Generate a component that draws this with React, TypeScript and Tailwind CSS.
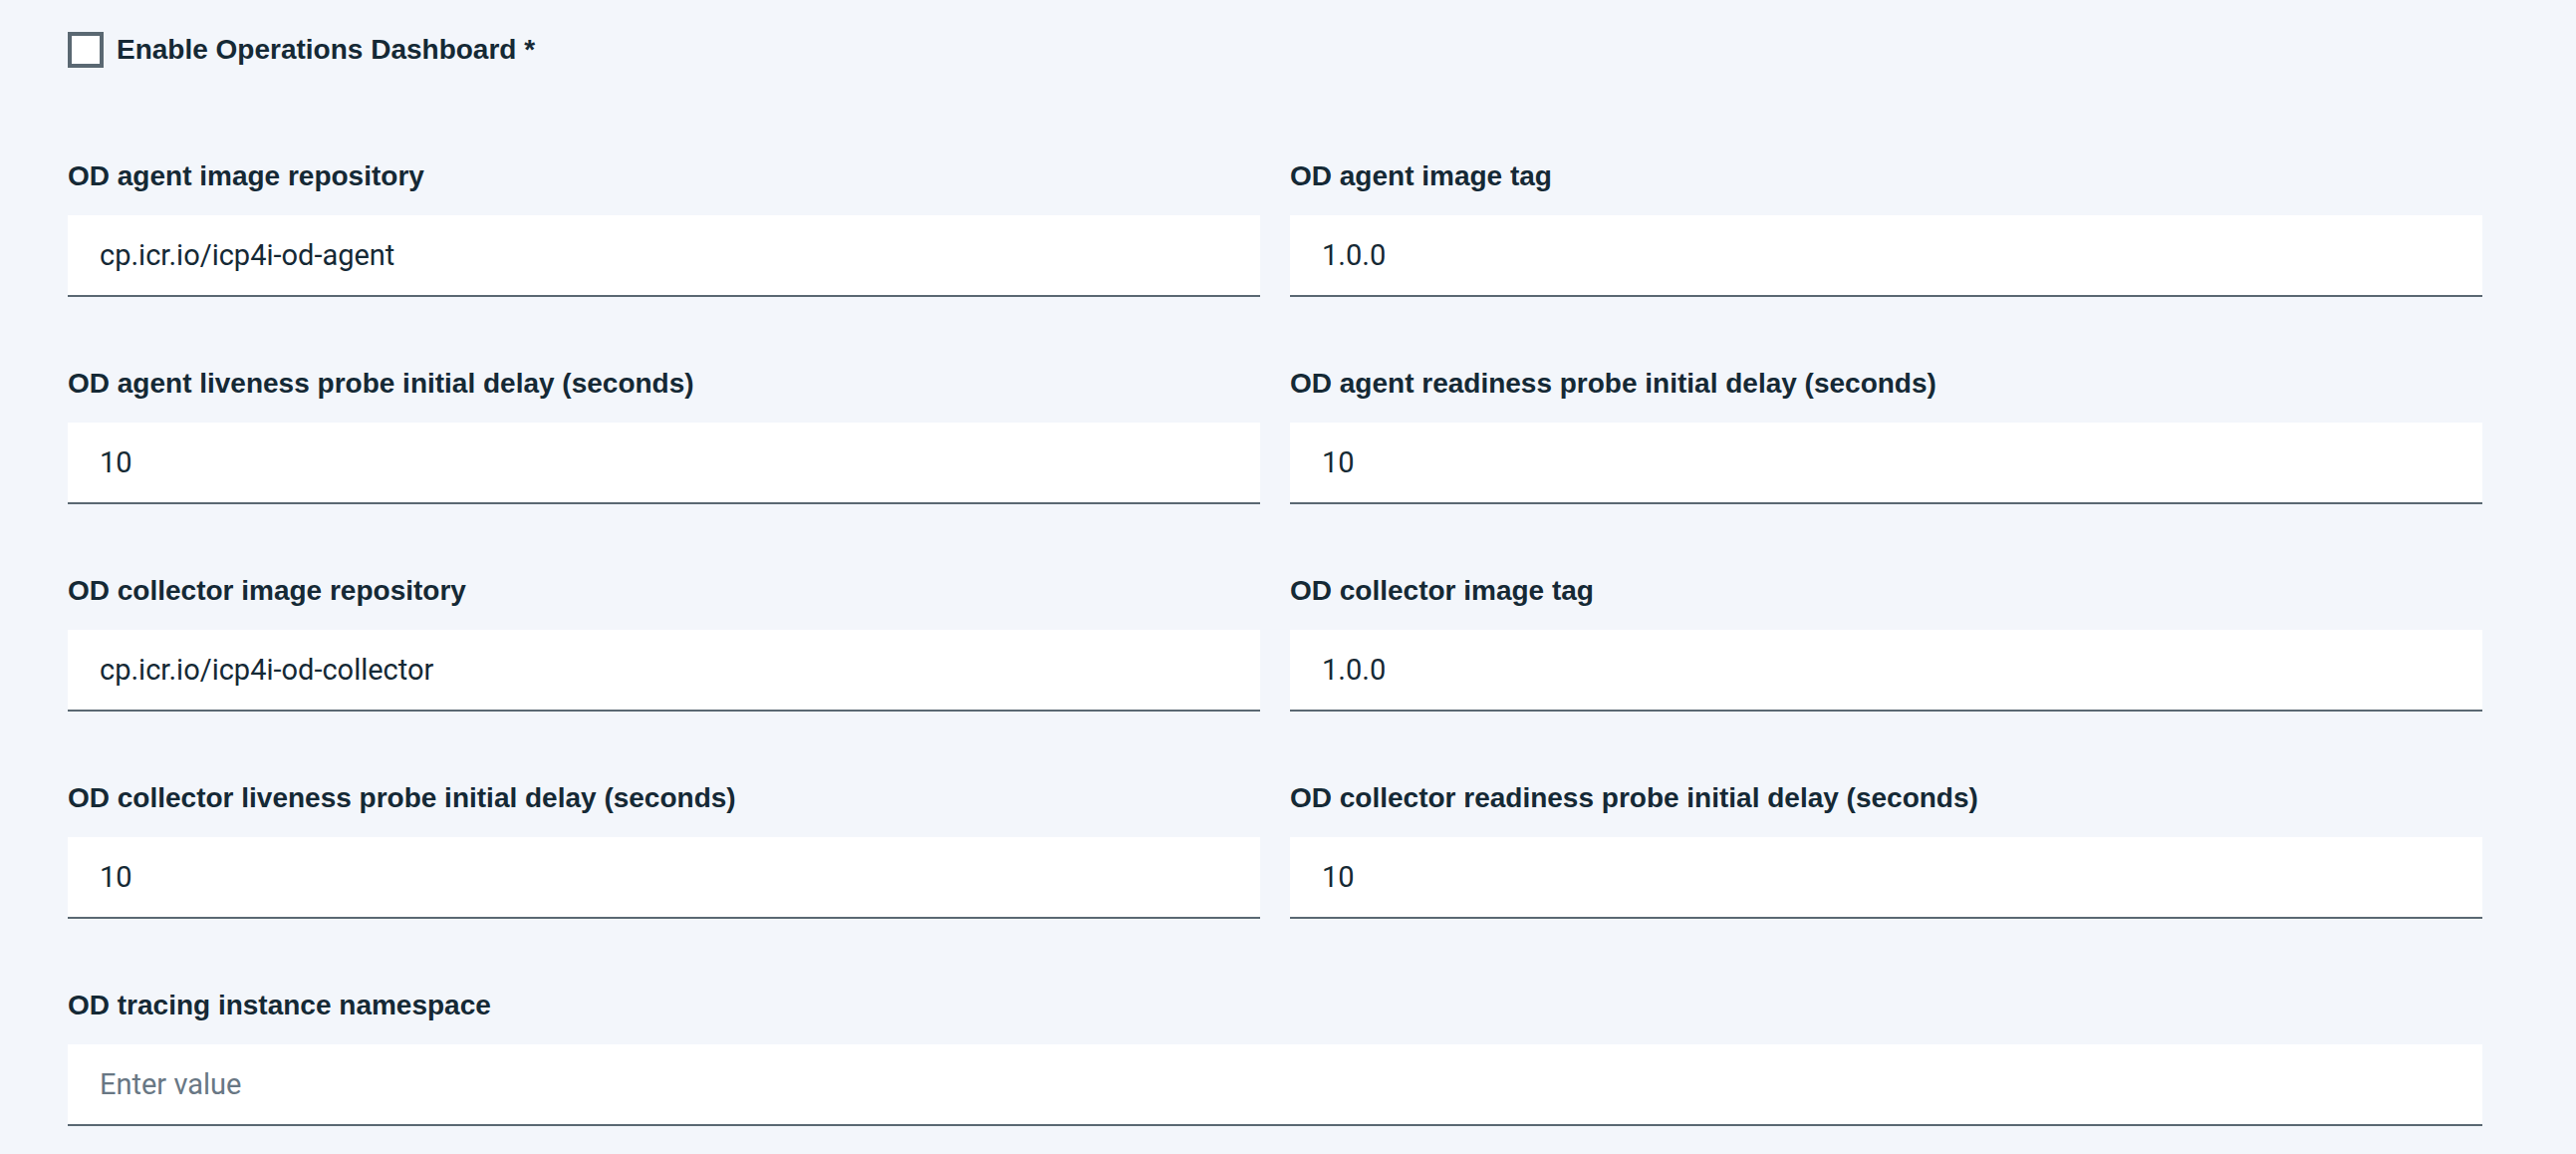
import { useState } from 'react';

type Field = {
    label: string;
    value?: string;
    full?: boolean;
};

const fields: Field[] = [
    { label: 'OD agent image repository', value: 'cp.icr.io/icp4i-od-agent' },
    { label: 'OD agent image tag', value: '1.0.0' },
    { label: 'OD agent liveness probe initial delay (seconds)', value: '10' },
    { label: 'OD agent readiness probe initial delay (seconds)', value: '10' },
    { label: 'OD collector image repository', value: 'cp.icr.io/icp4i-od-collector' },
    { label: 'OD collector image tag', value: '1.0.0' },
    { label: 'OD collector liveness probe initial delay (seconds)', value: '10' },
    { label: 'OD collector readiness probe initial delay (seconds)', value: '10' },
    { label: 'OD tracing instance namespace', full: true },
];

function TextField({ field }: { field: Field }) {
    return (
        <div className={field.full ? 'col-span-2 flex flex-col' : 'flex flex-col'}>
            <label className="h-8 leading-8 mb-[23px] text-[28px] font-bold text-[#152935] font-['Liberation_Sans',Arial,sans-serif]">
                {field.label}
            </label>
            <input
                type="text"
                defaultValue={field.value}
                placeholder="Enter value"
                className="h-[82px] w-full bg-white border-b-2 border-[#5a6872] px-8 text-[29px] text-[#152935] placeholder:text-[#687784] outline-none font-['Roboto','Noto_Sans',sans-serif]"
            />
        </div>
    );
}

export default function App() {
    const [enabled, setEnabled] = useState(false);

    return (
        <div className="min-h-screen bg-[#f3f6fb] pl-[68px] pr-[94px] pt-8 pb-8">
            <label className="flex items-center gap-[13px] cursor-pointer w-max h-9">
                <span
                    onClick={() => setEnabled(!enabled)}
                    className="w-9 h-9 border-4 border-[#5a6872] bg-white flex items-center justify-center"
                >
                    {enabled && <span className="w-4 h-4 bg-[#5a6872]" />}
                </span>
                <span className="leading-9 text-[28px] font-bold text-[#152935] font-['Liberation_Sans',Arial,sans-serif]">
                    Enable Operations Dashboard *
                </span>
            </label>

            <div className="grid grid-cols-2 gap-x-[30px] gap-y-[71px] mt-[93px]">
                {fields.map((f) => (
                    <TextField key={f.label} field={f} />
                ))}
            </div>
        </div>
    );
}
